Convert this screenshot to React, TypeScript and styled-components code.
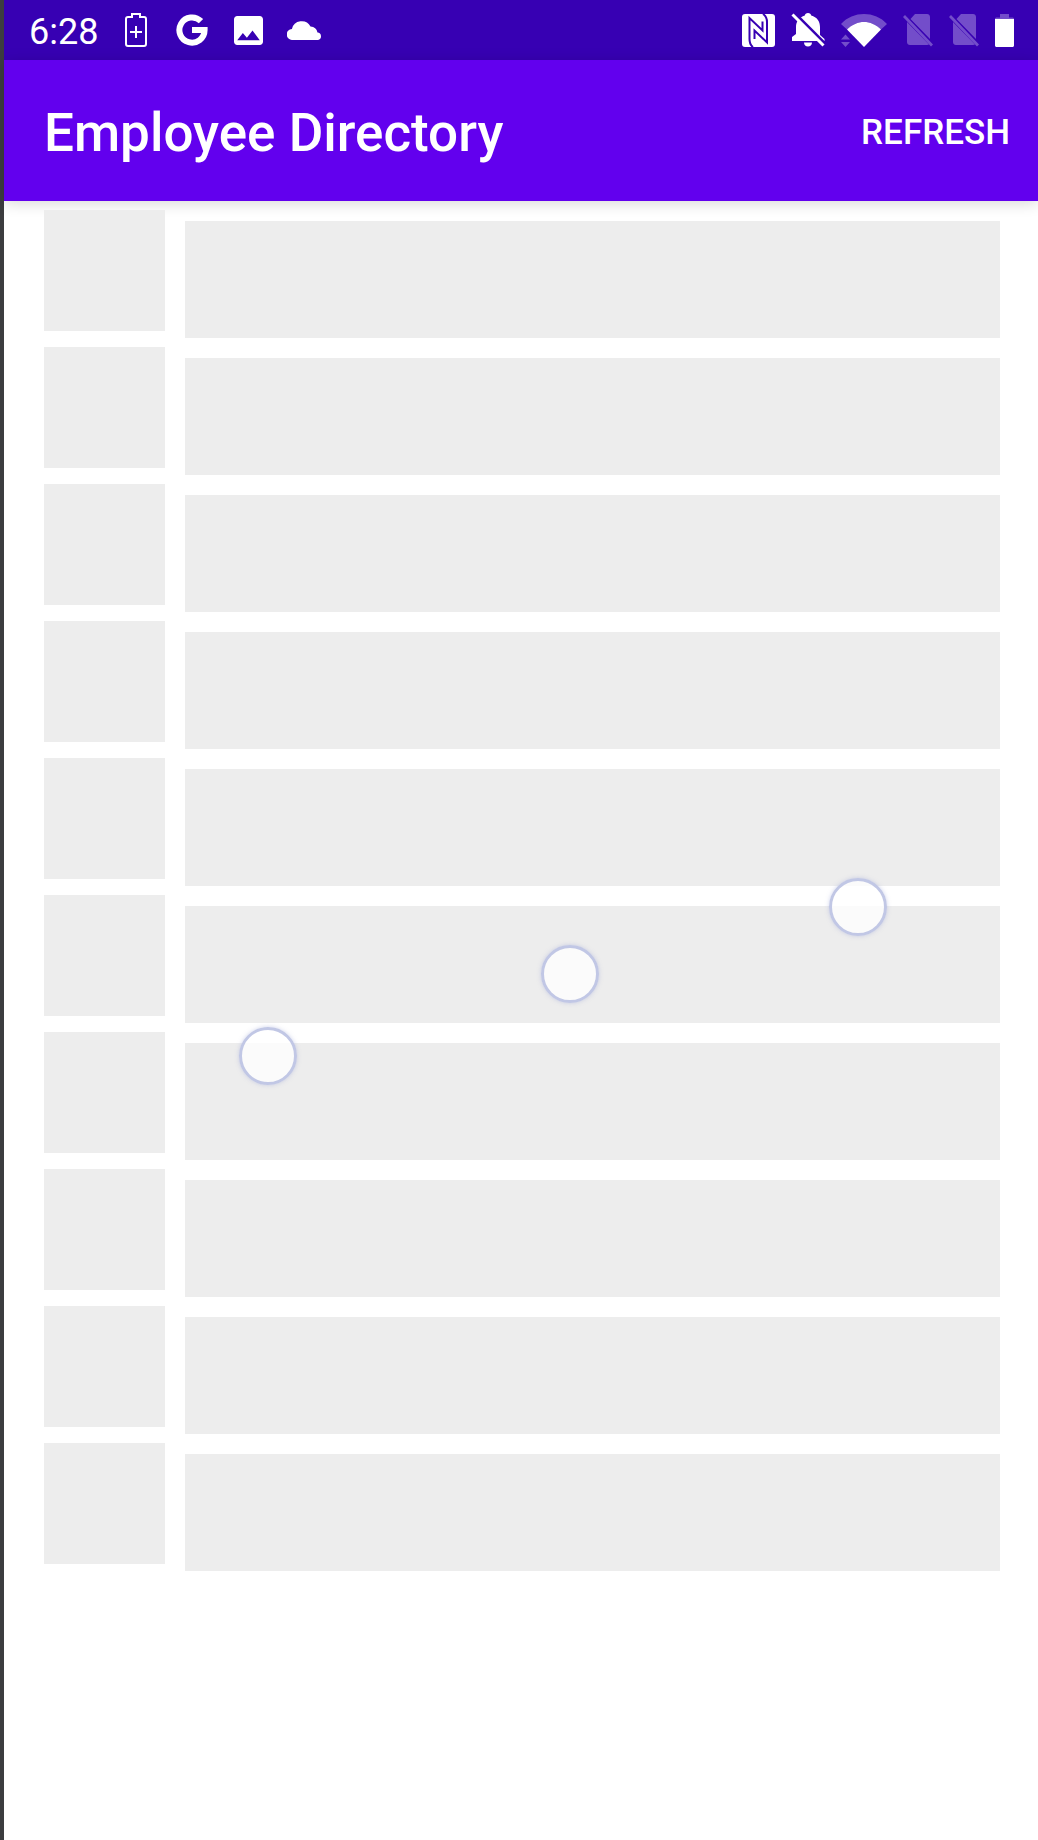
import React from "react";
import styled, { createGlobalStyle } from "styled-components";

const GlobalStyle = createGlobalStyle`
  *, *::before, *::after { box-sizing: border-box; }
  html, body { margin: 0; background: #ffffff; }
  body { font-family: Roboto, "Noto Sans", sans-serif; }
`;

const Screen = styled.div`
  position: relative;
  display: flex;
  flex-direction: column;
  min-height: 100vh;
  border-left: 4px solid #3c3d3f;
  background: #ffffff;
`;

const StatusBar = styled.div`
  display: flex;
  align-items: center;
  justify-content: space-between;
  height: 60px;
  padding: 0 24px 0 25px;
  background: #3700b3;
  color: #ffffff;
`;

const StatusGroup = styled.div`
  display: flex;
  align-items: center;
`;

const SystemIcons = styled(StatusGroup)`
  gap: 16px;
`;

const NotificationSlot = styled.span`
  display: flex;
  justify-content: center;
  width: 56px;
`;

const Clock = styled.time`
  margin-right: 10px;
  padding-top: 4px;
  font-size: 36px;
  line-height: 40px;
`;

const Glyph = styled.svg`
  display: block;
  flex: none;
  fill: currentColor;
`;

const AppBar = styled.header`
  display: flex;
  align-items: center;
  justify-content: space-between;
  height: 141px;
  padding: 4px 28px 0 40px;
  background: #6200ee;
  color: #ffffff;
  box-shadow: 0 2px 14px rgba(0, 0, 0, 0.16);
`;

const Title = styled.h1`
  margin: 0;
  font-size: 53px;
  font-weight: 500;
  line-height: 60px;
`;

const RefreshButton = styled.button`
  padding: 0;
  border: 0;
  background: none;
  color: inherit;
  font-family: inherit;
  font-size: 35px;
  font-weight: 500;
  line-height: 40px;
  text-transform: uppercase;
  cursor: pointer;
`;

const PlaceholderList = styled.ul`
  display: flex;
  flex-direction: column;
  gap: 9px;
  margin: 0;
  padding: 9px 38px 0 40px;
  list-style: none;
`;

const PlaceholderRow = styled.li`
  display: flex;
  align-items: flex-start;
  gap: 20px;
`;

const Avatar = styled.div`
  flex: none;
  width: 121px;
  height: 121px;
  background: #ededed;
`;

const Details = styled.div`
  flex: 1;
  height: 117px;
  margin-top: 11px;
  background: #ededed;
`;

const LoadingDot = styled.span<{ $left: number; $top: number }>`
  position: absolute;
  left: ${({ $left }) => $left}%;
  top: ${({ $top }) => $top}px;
  width: 58px;
  height: 58px;
  margin: -29px 0 0 -29px;
  border: 3px solid #c1c7e5;
  border-radius: 50%;
  background: rgba(255, 255, 255, 0.75);
  box-shadow: 0 0 4px rgba(159, 168, 218, 0.5);
`;

const rows = Array.from({ length: 10 }, (_, index) => index);

const dots = [
  { left: 82.6, top: 907 },
  { left: 54.7, top: 974 },
  { left: 25.5, top: 1056 },
];

function BatterySaverIcon() {
  return (
    <Glyph width="22" height="34" viewBox="0 0 22 34" aria-hidden="true">
      <path
        d="M7 4V1h8v3h4a2 2 0 0 1 2 2v25a2 2 0 0 1-2 2H3a2 2 0 0 1-2-2V6a2 2 0 0 1 2-2z"
        fill="none"
        stroke="currentColor"
        strokeWidth="2"
      />
      <path d="M10 13h2v5h5v2h-5v5h-2v-5H5v-2h5z" />
    </Glyph>
  );
}

function GoogleIcon() {
  return (
    <Glyph width="32" height="32" viewBox="0 0 32 32" aria-hidden="true">
      <path
        d="M25 7.2A12.6 12.6 0 1 0 28.6 16H16"
        fill="none"
        stroke="currentColor"
        strokeWidth="6"
      />
    </Glyph>
  );
}

function ImageIcon() {
  return (
    <Glyph width="29" height="29" viewBox="3 3 18 18" aria-hidden="true">
      <path d="M21 19V5c0-1.100-.9-2-2-2H5c-1.100 0-2 .9-2 2v14c0 1.100.9 2 2 2h14c1.100 0 2-.9 2-2zM8.500 13.500l2.500 3.010L14.500 12l4.500 6H5l3.500-4.500z" />
    </Glyph>
  );
}

function CloudIcon() {
  return (
    <Glyph width="35" height="20" viewBox="0 0 35 20" aria-hidden="true">
      <path d="M5.500 20a5.500 5.500 0 0 1-.6-11A10 10 0 0 1 23.500 6.500a7.500 7.500 0 0 1 7 6A3.800 3.800 0 0 1 31 20z" />
    </Glyph>
  );
}

function NfcIcon() {
  return (
    <Glyph width="33" height="33" viewBox="0 0 33 33" aria-hidden="true">
      <rect width="33" height="33" rx="3" />
      <g fill="none" stroke="#3700b3" strokeWidth="2">
        <path d="M11 33C8 31 7.500 28 7.500 25V4L20.500 16.500V7.500" />
        <path d="M21 0C24 2 25 5 25 8v20.500L12.500 16.500V25" />
      </g>
    </Glyph>
  );
}

function BellOffIcon() {
  return (
    <Glyph width="34" height="34" viewBox="0 0 34 34" aria-hidden="true">
      <path d="M17 0c1.800 0 3 1.200 3.200 2.500C26 4 29 8.500 29 14v8l4.500 4v2H1v-4l4-3v-7C5 8.500 8.500 4 13.800 2.500 14 1.200 15.200 0 17 0zM13 29.500h8c0 2.500-1.800 4-4 4s-4-1.500-4-4z" />
      <path d="M3.500 0l31 31" stroke="#3700b3" strokeWidth="3" />
      <path d="M1.500 1.500l31 31" stroke="currentColor" strokeWidth="3" />
    </Glyph>
  );
}

function WifiIcon() {
  return (
    <Glyph width="46" height="33" viewBox="0 0 46 33" aria-hidden="true">
      <path d="M0 10C12-3.300 34-3.300 46 10L40 15.500C30 5.500 16 5.500 6 15.500z" opacity="0.3" />
      <path d="M6 15.500C16 5.500 30 5.500 40 15.500L23 33z" />
      <path d="M0 25.500l4.500-5 4.500 5zM0 28h9l-4.500 5z" opacity="0.3" />
    </Glyph>
  );
}

function NoSimIcon() {
  return (
    <Glyph width="30" height="33" viewBox="0 0 30 33" aria-hidden="true">
      <g opacity="0.3">
        <path d="M12 0h12c1.700 0 3 1.300 3 3v22L7.500 5zM4 8l22 22.500c-.6.300-1.200.5-2 .5H7c-1.700 0-3-1.300-3-3z" />
        <path d="M0 3l2-2 28 29.500-2 2z" />
      </g>
    </Glyph>
  );
}

function BatteryIcon() {
  return (
    <Glyph width="19" height="33" viewBox="0 0 19 33" aria-hidden="true">
      <path d="M0 5c0-1 .7-1.500 1.500-1.500H5V0h9v3.500h3.500c.8 0 1.500.5 1.500 1.500z" opacity="0.3" />
      <path d="M0 5h19v26.500c0 .8-.7 1.500-1.500 1.500h-16C.7 33 0 32.300 0 31.500z" />
    </Glyph>
  );
}

const notifications = [BatterySaverIcon, GoogleIcon, ImageIcon, CloudIcon];

export default function App() {
  return (
    <Screen>
      <GlobalStyle />
      <StatusBar>
        <StatusGroup>
          <Clock>6:28</Clock>
          {notifications.map((Icon) => (
            <NotificationSlot key={Icon.name}>
              <Icon />
            </NotificationSlot>
          ))}
        </StatusGroup>
        <SystemIcons>
          <NfcIcon />
          <BellOffIcon />
          <WifiIcon />
          <NoSimIcon />
          <NoSimIcon />
          <BatteryIcon />
        </SystemIcons>
      </StatusBar>
      <AppBar>
        <Title>Employee Directory</Title>
        <RefreshButton type="button">Refresh</RefreshButton>
      </AppBar>
      <main>
        <PlaceholderList aria-label="Loading employees">
          {rows.map((row) => (
            <PlaceholderRow key={row}>
              <Avatar />
              <Details />
            </PlaceholderRow>
          ))}
        </PlaceholderList>
      </main>
      {dots.map((dot) => (
        <LoadingDot key={dot.top} $left={dot.left} $top={dot.top} />
      ))}
    </Screen>
  );
}
